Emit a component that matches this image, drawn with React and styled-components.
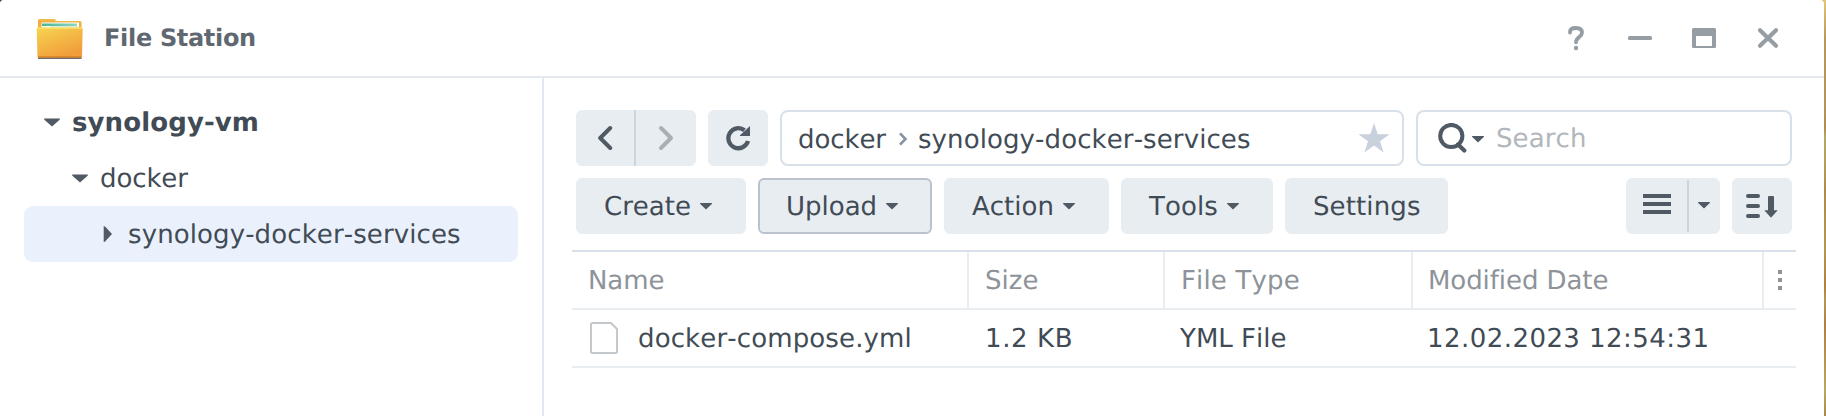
import React from "react";
import styled, { createGlobalStyle } from "styled-components";

const GlobalStyle = createGlobalStyle`
  *, *::before, *::after { box-sizing: border-box; }
  html, body { height: 416px; overflow: hidden; }
  body { margin: 0; background: #fff; }
  svg { display: block; flex: none; }
`;

const Desktop = styled.div`
  width: 1826px;
  height: 416px;
  padding-right: 2px;
  background:
    linear-gradient(#1c1830, #1c1830) 0 0 / 6px 6px no-repeat,
    linear-gradient(180deg, #e3c577 0, #b7975a 40px, #b2935a 110px, #b08c4e 128px, #b3a867 137px, #b3a05c 160px, #ae8b4b 190px, #b39650 250px, #b07f3d 286px, #b49657 300px, #b07f45 325px, #b79a55 370px, #b7a860 390px, #a98947 416px);
`;

const Window = styled.div`
  display: flex;
  flex-direction: column;
  width: 1824px;
  height: 416px;
  background: #fff;
  border-radius: 3px 4px 0 0;
  font-family: "DejaVu Sans", Verdana, sans-serif;
  font-size: 26px;
  line-height: 32px;
  font-kerning: none;
  font-variant-ligatures: none;
  color: #414b55;
  text-rendering: geometricPrecision;
  white-space: nowrap;
`;

const TitleBar = styled.header`
  display: flex;
  align-items: center;
  flex: none;
  height: 78px;
  padding: 0 44px 0 36px;
  border-bottom: 2px solid #e3e9ef;
`;

const Title = styled.h1`
  flex: 1;
  margin: 0 0 0 18px;
  font-size: 24px;
  font-weight: 700;
  letter-spacing: -0.32px;
  color: #5f6871;
`;

const AppIcon = styled.span`
  display: flex;
  padding-top: 2px;
`;

const WindowControls = styled.div`
  display: flex;
  align-items: center;
  gap: 40px;
`;

const HelpSlot = styled.span`
  display: flex;
  padding-right: 2px;
`;

const Body = styled.div`
  display: flex;
  flex: 1;
`;

const Sidebar = styled.nav`
  width: 544px;
  flex: none;
  padding: 16px 24px 0;
  border-right: 2px solid #e3e9f1;
`;

const TreeRow = styled.div`
  display: flex;
  align-items: center;
  gap: 11px;
  height: 56px;
  padding-left: ${(p) => 19 + p.$level * 28}px;
  border-radius: 9px;
  background: ${(p) => (p.$selected ? "#eaf1fc" : "transparent")};
  font-weight: ${(p) => (p.$level === 0 ? 700 : 400)};
`;

const Label = styled.span`
  padding-top: ${(p) => p.$drop ?? 2}px;
  letter-spacing: ${(p) => p.$track ?? 0}px;
`;

const Main = styled.main`
  flex: 1;
  padding: 32px 28px 0;
`;

const Bar = styled.div`
  display: flex;
  gap: 12px;
  height: 56px;
  margin: 0 4px 12px;
`;

const Button = styled.button`
  display: flex;
  align-items: center;
  justify-content: ${(p) => (p.$icon ? "center" : "flex-start")};
  gap: 9px;
  width: ${(p) => p.$width}px;
  height: 56px;
  padding: 0 0 0 ${(p) => (p.$icon ? 0 : 26)}px;
  border: 2px solid ${(p) => (p.$focused ? "#bac3cd" : "#e8edf2")};
  border-radius: 6px;
  background: #e8edf2;
  font: inherit;
  font-kerning: inherit;
  color: inherit;
  text-rendering: inherit;
`;

const SplitButton = styled.div`
  display: flex;
  align-items: center;
  width: ${(p) => p.$width}px;
  height: 56px;
  margin-left: ${(p) => (p.$end ? "auto" : 0)};
  border-radius: 6px;
  background: #e8edf2;
`;

const SplitPart = styled.button`
  display: flex;
  align-items: center;
  justify-content: center;
  width: ${(p) => p.$width}px;
  height: ${(p) => p.$height ?? 56}px;
  padding: 0 0 ${(p) => p.$raise ?? 0}px;
  border: 0;
  border-right: ${(p) => (p.$divided ? "2px solid #ccd5e0" : "0")};
  background: transparent;
`;

const Field = styled.div`
  display: flex;
  align-items: center;
  width: ${(p) => p.$width}px;
  height: 56px;
  padding: 0 12px 0 ${(p) => p.$inset}px;
  border: 2px solid #d8e0ea;
  border-radius: 8px;
  background: #fff;
`;

const Separator = styled.span`
  display: flex;
  margin: 2px 9px 0 11px;
`;

const StarSlot = styled.span`
  display: flex;
  margin-left: auto;
`;

const SearchInput = styled.input`
  flex: 1;
  min-width: 0;
  margin-left: 12px;
  padding: 1px 0 0;
  border: 0;
  outline: 0;
  background: transparent;
  font: inherit;
  letter-spacing: 0.1px;
  text-rendering: inherit;
  &::placeholder { color: #b1b6bb; opacity: 1; }
`;

const CaretSlot = styled.span`
  display: flex;
  margin: 3px 0 0 5px;
`;

const Table = styled.div`
  margin-top: 16px;
  border-top: 2px solid #d8e0ea;
`;

const Row = styled.div`
  display: grid;
  grid-template-columns: 397px 196px 248px 351px 32px;
  height: 58px;
  border-bottom: 2px solid #e8edf2;
  color: ${(p) => (p.$head ? "#8d9399" : "#414b55")};
`;

const Cell = styled.div`
  display: flex;
  align-items: center;
  padding-left: ${(p) => p.$inset ?? 16}px;
  border-right: 2px solid ${(p) => (p.$ruled ? "#e8edf2" : "transparent")};
`;

const MoreButton = styled.div`
  display: flex;
  align-items: center;
  padding-left: 14px;
`;

const FileName = styled.span`
  display: flex;
  align-items: center;
  gap: 20px;
`;

const DARK = "#505a64";
const GREY = "#969da3";

const FolderIcon = () => (
  <svg width="50" height="42" viewBox="0 0 50 42">
    <defs>
      <linearGradient id="front" x1="0" y1="0" x2="0.55" y2="1">
        <stop offset="0" stopColor="#f6d552" />
        <stop offset="0.5" stopColor="#f4b945" />
        <stop offset="1" stopColor="#f19d3a" />
      </linearGradient>
      <linearGradient id="paper" x1="0" y1="0" x2="1" y2="0">
        <stop offset="0" stopColor="#48b895" />
        <stop offset="1" stopColor="#8fd4c2" />
      </linearGradient>
    </defs>
    <path d="M2 10V2.6Q2 1 3.600 1H18.500L20.500 3H44Q45.500 3 45.500 4.500V11H2Z" fill="#efae3d" />
    <path d="M3 2H18L20 4H44" fill="none" stroke="#f4c24e" strokeWidth="1" />
    <path d="M5.500 4.500H43V10H5.500Z" fill="#fff" />
    <path d="M6 5.500H41V8H6Z" fill="url(#paper)" />
    <path d="M14 8H42V9.600H14Z" fill="#d9efdc" />
    <path d="M2 39H45.500V41H2Z" fill="#4f5356" opacity="0.85" />
    <path d="M0.700 11Q0.700 9.600 2.100 9.600H45.300Q46.700 9.600 46.700 11L46 38.500Q46 39.400 45 39.400H2.500Q1.500 39.400 1.500 38.500Z" fill="url(#front)" />
    <path d="M1.500 10.200H46" stroke="#fae36c" strokeWidth="1.200" />
    <path d="M2 38.800H45.500" stroke="#d98025" strokeWidth="1.200" />
  </svg>
);

const HelpIcon = () => (
  <svg width="20" height="28" viewBox="0 0 20 28">
    <path d="M4 8.500V8C4 5.300 6.300 4 10 4C13.700 4 16 5.700 16 8.700C16 13 10 13 10 18.300" fill="none" stroke={GREY} strokeWidth="3.800" strokeLinecap="round" strokeLinejoin="round" />
    <circle cx="10" cy="24" r="2.200" fill={GREY} />
  </svg>
);
const MinimizeIcon = () => (
  <svg width="24" height="24"><rect y="10" width="24" height="4" rx="1.500" fill={GREY} /></svg>
);
const MaximizeIcon = () => (
  <svg width="24" height="20">
    <path fillRule="evenodd" d="M1.500 0H22.500Q24 0 24 1.500V18.500Q24 20 22.500 20H1.500Q0 20 0 18.500V1.500Q0 0 1.500 0ZM4 8V18H20V8Z" fill={GREY} />
  </svg>
);
const CloseIcon = () => (
  <svg width="24" height="24" viewBox="0 0 24 24">
    <path d="M4 4.300L20 19.700M20 4.300L4 19.700" stroke={GREY} strokeWidth="4.200" strokeLinecap="round" />
  </svg>
);

const TreeArrow = ({ open }) => (
  <svg width="18" height="18" viewBox="0 0 18 18">
    <path d={open ? "M1 5.500H17Q17 6.800 15.500 7.800L9 13.500L2.500 7.800Q1 6.800 1 5.500Z" : "M4.700 1Q6 1 7 2.500L13 9L7 15.500Q6 17 4.700 17Z"} fill={DARK} />
  </svg>
);

const Caret = () => (
  <svg width="12" height="7" viewBox="0 0 12 7">
    <path d="M0 0H12Q12 1 11 1.800L6 6.500L1 1.800Q0 1 0 0Z" fill={DARK} />
  </svg>
);

const BackIcon = () => (
  <svg width="16" height="26" viewBox="0 0 16 26"><path d="M13.200 3L3.200 13L13.200 23" fill="none" stroke={DARK} strokeWidth="4" strokeLinecap="round" strokeLinejoin="round" /></svg>
);
const ForwardIcon = () => (
  <svg width="16" height="26" viewBox="0 0 16 26"><path d="M3 3L13 13L3 23" fill="none" stroke="#aaafb4" strokeWidth="4" strokeLinecap="round" strokeLinejoin="round" /></svg>
);
const RefreshIcon = () => (
  <svg width="26" height="26" viewBox="0 0 26 26">
    <path d="M23 16A10 10 0 1 1 19.500 5.300" fill="none" stroke={DARK} strokeWidth="4.300" />
    <path d="M25 1V11H15V10.200Z" fill={DARK} />
  </svg>
);
const CrumbIcon = () => (
  <svg width="12" height="16" viewBox="0 0 12 16"><path d="M3 2.300L8.500 8L3 13.700" fill="none" stroke="#8592a6" strokeWidth="2.600" /></svg>
);
const StarIcon = () => (
  <svg width="32" height="30" viewBox="0 0 32 30">
    <path d="M16 0L19.700 11.300H31.500L22 18.300L25.600 29.500L16 22.600L6.400 29.500L10 18.300L0.500 11.300H12.300Z" fill="#c9d1dc" />
  </svg>
);
const SearchIcon = () => (
  <svg width="29" height="30" viewBox="0 0 29 30">
    <circle cx="13.300" cy="13" r="11.100" fill="none" stroke={DARK} strokeWidth="4" />
    <path d="M20 21.500L26.300 27.500" stroke={DARK} strokeWidth="4.200" strokeLinecap="round" />
  </svg>
);
const ListIcon = () => (
  <svg width="28" height="20"><path d="M0 0H28V4H0ZM0 8H28V12H0ZM0 16H28V20H0Z" fill={DARK} /></svg>
);
const SortIcon = () => (
  <svg width="32" height="24" viewBox="0 0 32 24">
    <path d="M2 2H12M2 12H12M2 22H12" stroke={DARK} strokeWidth="4" strokeLinecap="round" />
    <path d="M22 4.700Q22 3.700 23 3.700H27Q28 3.700 28 4.700V18H31.700L25 25.500L18.300 18H22Z" fill={DARK} transform="translate(0 -1.800)" />
  </svg>
);
const DotsIcon = () => (
  <svg width="4" height="20"><path d="M0 0H4V4H0ZM0 8H4V12H0ZM0 16H4V20H0Z" fill="#8d9399" /></svg>
);
const FileIcon = () => (
  <svg width="28" height="32" viewBox="0 0 28 32">
    <path d="M2.500 1H21L27 7V29.500Q27 31 25.500 31H2.500Q1 31 1 29.500V2.500Q1 1 2.500 1Z" fill="#fff" stroke="#c4c9ce" strokeWidth="2" />
  </svg>
);

const tree = [
  { name: "synology-vm", level: 0, open: true, track: 0.1 },
  { name: "docker", level: 1, open: true, track: -0.1 },
  { name: "synology-docker-services", level: 2, open: false, selected: true, track: 0.1 },
];

const actions = [
  { name: "Create", width: 170, menu: true, track: 0 },
  { name: "Upload", width: 174, menu: true, track: 0, focused: true },
  { name: "Action", width: 165, menu: true, track: 0 },
  { name: "Tools", width: 152, menu: true, track: 0.1 },
  { name: "Settings", width: 163, track: 0.12 },
];

export default function App() {
  return (
    <Desktop>
      <GlobalStyle />
      <Window>
        <TitleBar>
          <AppIcon><FolderIcon /></AppIcon>
          <Title>File Station</Title>
          <WindowControls>
            <HelpSlot><HelpIcon /></HelpSlot>
            <MinimizeIcon />
            <MaximizeIcon />
            <CloseIcon />
          </WindowControls>
        </TitleBar>
        <Body>
          <Sidebar>
            {tree.map((n) => (
              <TreeRow key={n.name} $level={n.level} $selected={n.selected}>
                <TreeArrow open={n.open} />
                <Label $track={n.track}>{n.name}</Label>
              </TreeRow>
            ))}
          </Sidebar>
          <Main>
            <Bar>
              <SplitButton $width={120}>
                <SplitPart $width={60} $divided><BackIcon /></SplitPart>
                <SplitPart $width={60}><ForwardIcon /></SplitPart>
              </SplitButton>
              <Button $width={60} $icon><RefreshIcon /></Button>
              <Field $width={624} $inset={16}>
                <Label $drop={4} $track={-0.08}>docker</Label>
                <Separator><CrumbIcon /></Separator>
                <Label $drop={4} $track={0.1}>synology-docker-services</Label>
                <StarSlot><StarIcon /></StarSlot>
              </Field>
              <Field $width={376} $inset={20}>
                <SearchIcon />
                <CaretSlot><Caret /></CaretSlot>
                <SearchInput placeholder="Search" />
              </Field>
            </Bar>
            <Bar>
              {actions.map((a) => (
                <Button key={a.name} $width={a.width} $focused={a.focused}>
                  <Label $track={a.track}>{a.name}</Label>
                  {a.menu && <Caret />}
                </Button>
              ))}
              <SplitButton $width={94} $end>
                <SplitPart $width={63} $height={52} $raise={4} $divided><ListIcon /></SplitPart>
                <SplitPart $width={30} $height={52} $raise={1}><Caret /></SplitPart>
              </SplitButton>
              <Button $width={60} $icon><SortIcon /></Button>
            </Bar>
            <Table>
              <Row $head>
                <Cell $ruled><Label $track={-0.1}>Name</Label></Cell>
                <Cell $ruled><Label>Size</Label></Cell>
                <Cell $ruled><Label $track={0.15}>File Type</Label></Cell>
                <Cell $ruled $inset={15}><Label $track={-0.08}>Modified Date</Label></Cell>
                <MoreButton><DotsIcon /></MoreButton>
              </Row>
              <Row>
                <Cell $inset={18}>
                  <FileName><FileIcon /><Label $track={0.13}>docker-compose.yml</Label></FileName>
                </Cell>
                <Cell><Label $track={0.6}>1.2 KB</Label></Cell>
                <Cell $inset={15}><Label>YML File</Label></Cell>
                <Cell $inset={14}><Label $track={0.45}>12.02.2023 12:54:31</Label></Cell>
              </Row>
            </Table>
          </Main>
        </Body>
      </Window>
    </Desktop>
  );
}
